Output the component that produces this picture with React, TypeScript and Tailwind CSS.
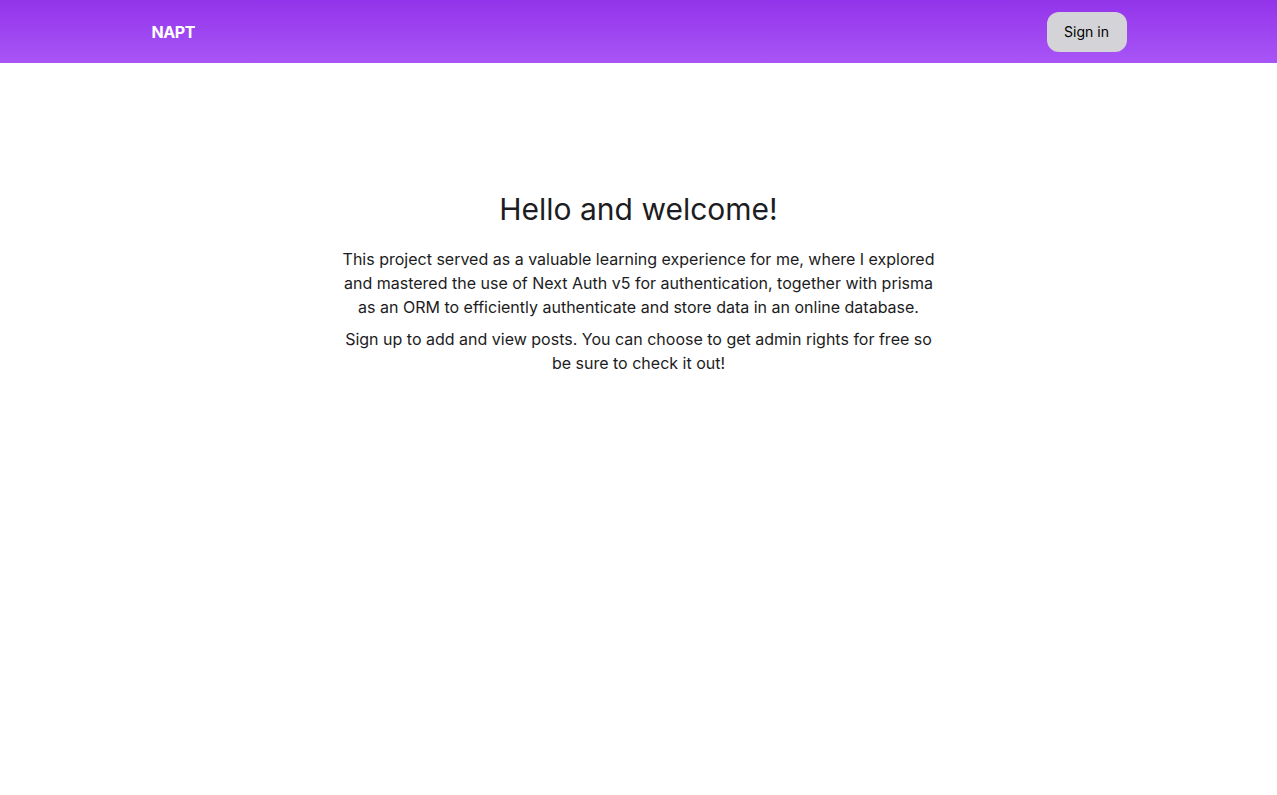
import React from "react";

const App: React.FC = () => {
  return (
    <div className="min-h-screen bg-white font-['Inter',sans-serif] text-[#1c1c22]">
      {/* Navbar */}
      <header className="h-[63px] bg-gradient-to-b from-[#9333ea] to-[#a855f7]">
        <div className="max-w-5xl mx-auto px-6 h-full flex items-center justify-between">
          <span className="text-white font-bold text-base tracking-tight pl-px">NAPT</span>
          <button className="w-20 h-10 rounded-xl bg-[#d4d4d8] text-sm text-black">
            Sign in
          </button>
        </div>
      </header>

      {/* Hero */}
      <main className="flex flex-col items-center pt-[128px] text-center">
        <h1 className="text-3xl leading-9">Hello and welcome!</h1>
        <p className="mt-5 max-w-[600px] text-base leading-6">
          This project served as a valuable learning experience for me, where I explored and
          mastered the use of Next Auth v5 for authentication, together with prisma as an ORM to
          efficiently authenticate and store data in an online database.
        </p>
        <p className="mt-2 max-w-[600px] text-base leading-6">
          Sign up to add and view posts. You can choose to get admin rights for free so be sure to
          check it out!
        </p>
      </main>
    </div>
  );
};

export default App;
